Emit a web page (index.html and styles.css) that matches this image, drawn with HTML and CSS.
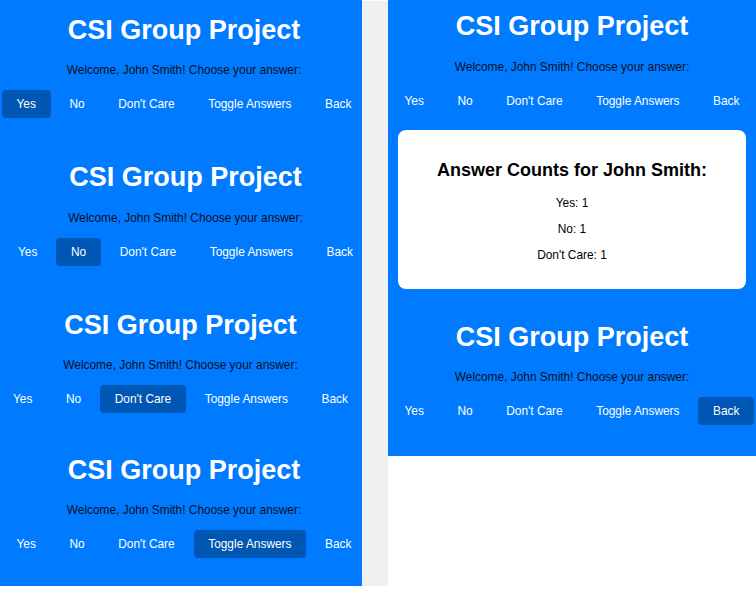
FILE: index.html
```html
<!DOCTYPE html>
<html lang="en">
<head>
<meta charset="utf-8">
<title>CSI Group Project</title>
<link rel="stylesheet" href="styles.css">
</head>
<body>
<div class="collage">
  <div class="col col-left">
    <section class="screen shot-1">
      <h1 class="title">CSI Group Project</h1>
      <p class="welcome">Welcome, John Smith! Choose your answer:</p>
      <div class="actions">
        <button class="btn is-active">Yes</button>
        <button class="btn">No</button>
        <button class="btn">Don't Care</button>
        <button class="btn">Toggle Answers</button>
        <button class="btn">Back</button>
      </div>
    </section>
    <section class="screen shot-2">
      <h1 class="title">CSI Group Project</h1>
      <p class="welcome">Welcome, John Smith! Choose your answer:</p>
      <div class="actions">
        <button class="btn">Yes</button>
        <button class="btn is-active">No</button>
        <button class="btn">Don't Care</button>
        <button class="btn">Toggle Answers</button>
        <button class="btn">Back</button>
      </div>
    </section>
    <section class="screen shot-3">
      <h1 class="title">CSI Group Project</h1>
      <p class="welcome">Welcome, John Smith! Choose your answer:</p>
      <div class="actions">
        <button class="btn">Yes</button>
        <button class="btn">No</button>
        <button class="btn is-active">Don't Care</button>
        <button class="btn">Toggle Answers</button>
        <button class="btn">Back</button>
      </div>
    </section>
    <section class="screen shot-4">
      <h1 class="title">CSI Group Project</h1>
      <p class="welcome">Welcome, John Smith! Choose your answer:</p>
      <div class="actions">
        <button class="btn">Yes</button>
        <button class="btn">No</button>
        <button class="btn">Don't Care</button>
        <button class="btn is-active">Toggle Answers</button>
        <button class="btn">Back</button>
      </div>
    </section>
  </div>
  <div class="divider"></div>
  <div class="col col-right">
    <section class="screen shot-top">
      <h1 class="title">CSI Group Project</h1>
      <p class="welcome">Welcome, John Smith! Choose your answer:</p>
      <div class="actions">
        <button class="btn">Yes</button>
        <button class="btn">No</button>
        <button class="btn">Don't Care</button>
        <button class="btn">Toggle Answers</button>
        <button class="btn">Back</button>
      </div>
    </section>
    <div class="counts">
      <h2 class="counts-title">Answer Counts for John Smith:</h2>
      <p class="count">Yes: 1</p>
      <p class="count">No: 1</p>
      <p class="count">Don't Care: 1</p>
    </div>
    <section class="screen shot-bottom">
      <h1 class="title">CSI Group Project</h1>
      <p class="welcome">Welcome, John Smith! Choose your answer:</p>
      <div class="actions">
        <button class="btn">Yes</button>
        <button class="btn">No</button>
        <button class="btn">Don't Care</button>
        <button class="btn">Toggle Answers</button>
        <button class="btn is-active">Back</button>
      </div>
    </section>
  </div>
</div>
</body>
</html>
```

FILE: styles.css
```css
html, body {
  margin: 0;
  padding: 0;
  background: #ffffff;
}

body {
  font-family: "Liberation Sans", Arial, sans-serif;
}

.collage {
  display: flex;
  align-items: flex-start;
}

.col {
  background: #007bff;
  overflow: hidden;
  display: flex;
  flex-direction: column;
}

.col-left {
  width: 362px;
  height: 586px;
}

.divider {
  width: 26px;
  height: 585px;
  margin-top: 1px;
  background: #f0f0f0;
}

.col-right {
  width: 368px;
  height: 456px;
}

.screen {
  width: 368px;
  flex: none;
  display: flex;
  flex-direction: column;
  align-items: center;
}

.title {
  margin: 14.5px 0 0;
  font-size: 27px;
  line-height: 31px;
  font-weight: bold;
  color: #ffffff;
  white-space: nowrap;
}

.welcome {
  margin: 17.5px 0 0;
  font-size: 11.9px;
  line-height: 14px;
  color: #0a0f1e;
  white-space: nowrap;
}

.actions {
  margin-top: 13px;
  display: flex;
  justify-content: center;
  gap: 4.35px;
  width: 368px;
}

.btn {
  flex: none;
  height: 28px;
  padding: 0 14.6px;
  border: none;
  border-radius: 4px;
  background: transparent;
  color: #ffffff;
  font-family: "Liberation Sans", Arial, sans-serif;
  font-size: 11.9px;
  line-height: 28px;
  white-space: nowrap;
}

.btn.is-active {
  background: #0056b3;
}

/* left column: four stacked captures */
.shot-1 { height: 147.5px; margin-left: 0; }
.shot-2 { height: 147.5px; margin-left: 1.5px; }
.shot-3 { height: 145px; margin-left: -3.5px; }
.shot-4 { height: 146px; margin-left: 0; }

/* right column */
.shot-top .title { margin-top: 11px; }

.counts {
  margin: 15.5px 10px 0;
  padding: 15px;
  background: #ffffff;
  border-radius: 8px;
  text-align: center;
  color: #000000;
}

.counts-title {
  margin: 15px 0;
  font-size: 18px;
  line-height: 21px;
  font-weight: bold;
}

.count {
  margin: 12px 0;
  font-size: 11.9px;
  line-height: 14px;
}

.shot-bottom { margin-top: 18px; }
```
